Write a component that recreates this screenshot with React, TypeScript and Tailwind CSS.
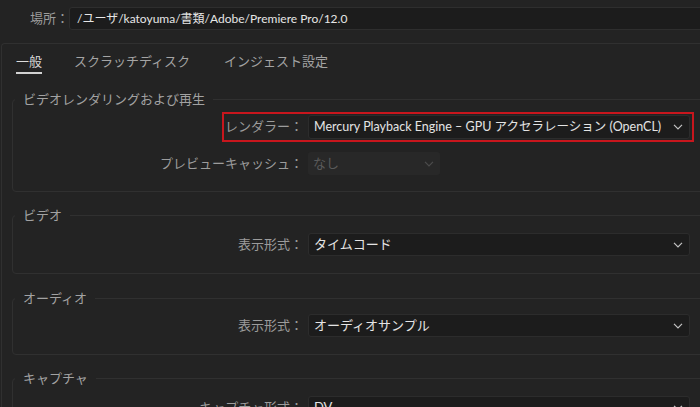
const font = "font-['Lato','Noto_Sans_CJK_JP',sans-serif]";

function Chevron({ dim }: { dim?: boolean }) {
  return (
    <svg width="10" height="6" viewBox="0 0 10 6" fill="none">
      <polyline
        points="1,0.8 5,4.8 9,0.8"
        stroke={dim ? '#4c4c4c' : '#c4c4c4'}
        strokeWidth="1.2"
      />
    </svg>
  );
}

function Select({ value, width, height, disabled, size = 'text-[13px]' }: { value: string; width: string; height: string; disabled?: boolean; size?: string }) {
  return (
    <div
      className={`${width} ${height} flex items-center justify-between rounded-[3px] pl-[5px] pr-[6px] ${
        disabled
          ? 'bg-[#282828] text-[#5a5a5a]'
          : 'border border-[#2c2c2c] bg-[#1c1c1c] text-[#e4e4e4]'
      }`}
    >
      <span className={`whitespace-nowrap leading-none ${size}`}>{value}</span>
      <Chevron dim={disabled} />
    </div>
  );
}

function Row({ label, value, width = 'w-[382px]', height = 'h-[23px]', disabled }: { label: string; value: string; width?: string; height?: string; disabled?: boolean }) {
  return (
    <div className="flex items-center">
      <span className="w-[290px] whitespace-nowrap text-right text-[13px] text-[#9c9c9c]">{label}</span>
      <div className="ml-[5px]">
        <Select value={value} width={width} height={height} disabled={disabled} />
      </div>
    </div>
  );
}

function Group({ title, className, children }: { title: string; className: string; children: React.ReactNode }) {
  return (
    <fieldset className={`w-[720px] rounded-[4px] border border-[#303030] ${className}`}>
      <legend className="ml-[2px] px-[8px] text-[13px] leading-[18px] text-[#a2a2a2]">{title}</legend>
      {children}
    </fieldset>
  );
}

export default function App() {
  return (
    <div className={`w-[700px] h-[407px] overflow-hidden bg-[#232323] ${font}`}>
      {/* 場所 */}
      <div className="flex items-center pt-[7px]">
        <span className="w-[69px] whitespace-nowrap pl-[30px] text-[13px] text-[#9c9c9c]">場所：</span>
        <div className="flex h-[23px] w-[700px] shrink-0 items-center rounded-[3px] border border-[#2e2e2e] bg-[#1c1c1c] pl-[7px]">
          <span className="whitespace-nowrap text-[12px] text-[#e6e6e6]">/ユーザ/katoyuma/書類/Adobe/Premiere Pro/12.0</span>
        </div>
      </div>

      {/* Panel */}
      <div className="ml-[1px] mt-[13px] rounded-tl-[4px] border-l border-t border-[#303030]">
        {/* Tabs */}
        <div className="flex gap-[32px] pl-[14px] pt-[8px] text-[13px] leading-[18px]">
          <div className="flex flex-col">
            <span className="text-[#dcdcdc]">一般</span>
            <div className="mt-[2px] h-[2px] bg-[#d2d2d2]" />
          </div>
          <span className="text-[#a4a4a4]">スクラッチディスク</span>
          <span className="ml-[2px] text-[#a4a4a4]">インジェスト設定</span>
        </div>

        <div className="pl-[10px]">
          <Group title="ビデオレンダリングおよび再生" className="mt-[16px] pb-[16px] pt-[4px]">
            <div className="pl-[209px]">
              <div className="flex h-[30px] w-[472px] items-center border-2 border-[#c8161d] pr-[2px]">
                <span className="flex-1 whitespace-nowrap pr-[1px] text-right text-[13px] text-[#9c9c9c]">レンダラー：</span>
                <div className="ml-[4px]">
                  <Select
                    value="Mercury Playback Engine – GPU アクセラレーション (OpenCL)"
                    width="w-[382px]"
                    height="h-[24px]"
                    size="text-[12.5px]"
                  />
                </div>
              </div>
            </div>
            <div className="mt-[10px]">
              <Row label="プレビューキャッシュ：" value="なし" width="w-[132px]" disabled />
            </div>
          </Group>

          <Group title="ビデオ" className="mt-[14px] pb-[17px] pt-[9px]">
            <Row label="表示形式：" value="タイムコード" />
          </Group>

          <Group title="オーディオ" className="mt-[15px] pb-[17px] pt-[7px]">
            <Row label="表示形式：" value="オーディオサンプル" />
          </Group>

          <Group title="キャプチャ" className="mt-[14px] pb-[17px] pt-[9px]">
            <Row label="キャプチャ形式：" value="DV" />
          </Group>
        </div>
      </div>
    </div>
  );
}
